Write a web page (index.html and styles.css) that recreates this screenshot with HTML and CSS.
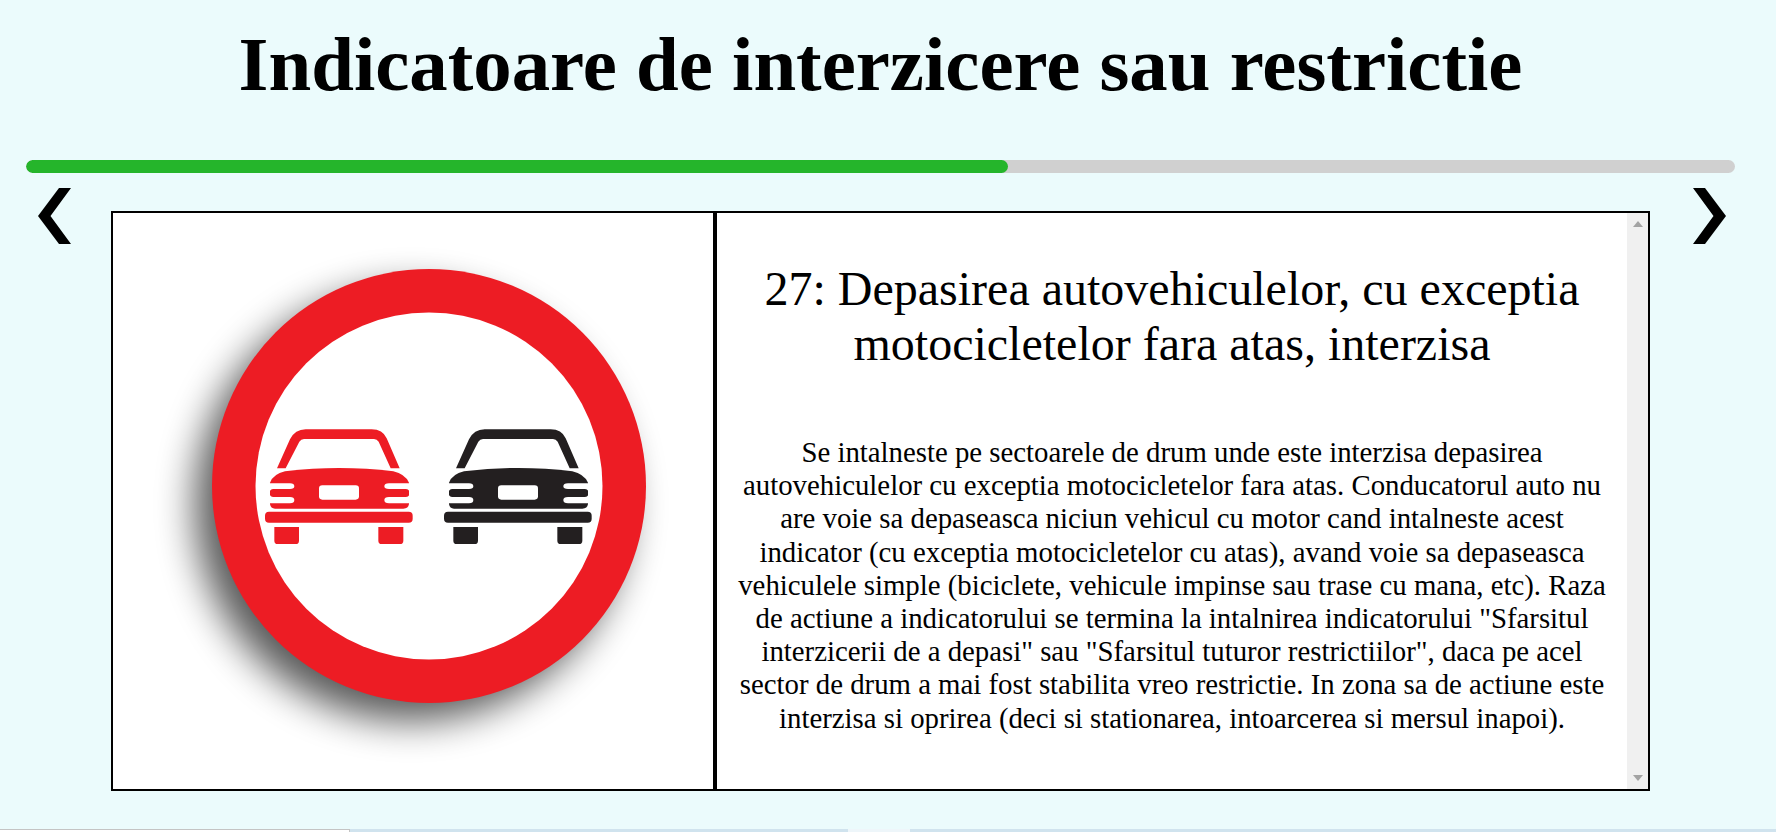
FILE: index.html
```html
<!DOCTYPE html>
<html lang="ro">
<head>
<meta charset="utf-8">
<title>Indicatoare de interzicere sau restrictie</title>
<link rel="stylesheet" href="styles.css">
</head>
<body>
<h1 class="title">Indicatoare de interzicere sau restrictie</h1>
<div class="progress"><div class="progress-fill"></div></div>
<main class="viewer">
  <a class="nav nav-prev" aria-label="Inapoi">
    <svg width="33" height="56" viewBox="0 0 33 56"><path d="M21 0H33L12.5 28 33 56H21L0 28Z"/></svg>
  </a>
  <section class="card">
    <div class="sign-panel">
      <svg class="sign" width="596" height="576" viewBox="113 213 596 576">
        <defs>
          <filter id="blur" x="-30%" y="-30%" width="160%" height="160%"><feGaussianBlur stdDeviation="19"/></filter>
          <symbol id="car" viewBox="0 0 600 510" width="200" height="170" overflow="visible">
            <path d="M111 205L150 118Q165 88 197 88H395Q428 88 440 115L479 205H452L416 125Q411 117 402 117H192Q183 117 178 125L137 205Z"/>
            <path d="M90 248Q100 222 135 214Q220 204 297 204Q380 204 460 214Q495 222 507 248V312Q505 326 490 326H105Q92 326 90 312Z"/>
            <path class="cut" d="M80 250H150Q163 250 163 259Q163 267 150 267H100Q90 267 88 279Q90 291 100 291H150Q163 291 163 300Q163 310 150 310H80Z"/>
            <path class="cut" d="M517 250H447Q433 250 433 259Q433 267 447 267H497Q508 267 509 279Q508 291 497 291H447Q433 291 433 300Q433 310 447 310H517Z"/>
            <rect class="cut" x="237" y="256" width="120" height="43" rx="10"/>
            <rect x="75" y="335" width="443" height="33" rx="12"/>
            <path d="M103 381H177V422Q177 432 167 432H113Q103 432 103 422Z"/>
            <path d="M415 381H490V422Q490 432 480 432H425Q415 432 415 422Z"/>
          </symbol>
        </defs>
        <circle class="sign-shadow" cx="411" cy="505" r="216" filter="url(#blur)"/>
        <circle class="sign-ring" cx="429" cy="486" r="217"/>
        <circle class="sign-face" cx="429" cy="486" r="173.5"/>
        <use href="#car" class="car-red" x="240" y="400"/>
        <use href="#car" class="car-black" x="419" y="400"/>
      </svg>
    </div>
    <div class="info-panel">
      <article class="info-text">
        <h2 class="sign-name">27: Depasirea autovehiculelor, cu exceptia motocicletelor fara atas, interzisa</h2>
        <p class="sign-desc">Se intalneste pe sectoarele de drum unde este interzisa depasirea autovehiculelor cu exceptia motocicletelor fara atas. Conducatorul auto nu are voie sa depaseasca niciun vehicul cu motor cand intalneste acest indicator (cu exceptia motocicletelor cu atas), avand voie sa depaseasca vehiculele simple (biciclete, vehicule impinse sau trase cu mana, etc). Raza de actiune a indicatorului se termina la intalnirea indicatorului "Sfarsitul interzicerii de a depasi" sau "Sfarsitul tuturor restrictiilor", daca pe acel sector de drum a mai fost stabilita vreo restrictie. In zona sa de actiune este interzisa si oprirea (deci si stationarea, intoarcerea si mersul inapoi).</p>
      </article>
      <div class="scrollbar" aria-hidden="true">
        <span class="arrow-up"></span>
        <span class="arrow-down"></span>
      </div>
    </div>
  </section>
  <a class="nav nav-next" aria-label="Inainte">
    <svg width="33" height="56" viewBox="0 0 33 56"><path d="M12 0H0L20.5 28 0 56H12L33 28Z"/></svg>
  </a>
</main>
<footer class="taskstrip">
  <div class="strip-white"></div>
  <div class="strip-blue strip-a"></div>
  <div class="strip-gap"></div>
  <div class="strip-blue strip-b"></div>
</footer>
</body>
</html>
```
FILE: styles.css
```css
* { box-sizing: border-box; }
html, body { height: 100%; }
body {
  margin: 0;
  height: 100vh;
  overflow: hidden;
  display: flex;
  flex-direction: column;
  background: #ebfbfc;
  color: #000;
  font-family: "Liberation Serif", "Times New Roman", serif;
}
.title {
  margin: 0;
  height: 160px;
  padding: 19px 15px 0 0;
  font-size: 76.8px;
  line-height: 92px;
  font-weight: 700;
  text-align: center;
}
.progress {
  margin-left: 26px;
  width: 1709px;
  height: 13px;
  border-radius: 7px;
  background: #d0d0d0;
  overflow: hidden;
}
.progress-fill {
  width: 982px;
  height: 100%;
  border-radius: 7px;
  background: #25b52b;
}
.viewer {
  display: flex;
  align-items: flex-start;
  margin-top: 15px;
}
.nav { display: block; flex: none; }
.nav svg { display: block; fill: #000; }
.nav-prev { width: 111px; padding: 0 0 0 38px; }
.nav-next { padding-left: 43px; }
.card {
  flex: none;
  width: 1539px;
  height: 580px;
  margin-top: 23px;
  display: flex;
  border: 2px solid #000;
  background: #fff;
}
.sign-panel {
  flex: none;
  width: 604px;
  border-right: 4px solid #000;
}
.sign { display: block; }
.sign-shadow { fill: #000; opacity: .65; }
.sign-ring { fill: #ed1c24; }
.sign-face { fill: #fff; }
.car-red { color: #ed1c24; fill: #ed1c24; }
.car-black { color: #231f20; fill: #231f20; }
.cut { fill: #fff; }
.info-panel {
  flex: 1;
  min-width: 0;
  display: flex;
}
.info-text {
  flex: 1;
  min-width: 0;
  padding: 0 20px;
  text-align: center;
}
.sign-name {
  margin: 0;
  padding-top: 48px;
  font-size: 48px;
  line-height: 55px;
  font-weight: 400;
}
.sign-desc {
  margin: 65px 0 0;
  font-size: 28.8px;
  line-height: 33.2px;
}
.scrollbar {
  flex: none;
  width: 21px;
  display: flex;
  flex-direction: column;
  justify-content: space-between;
  align-items: center;
  padding: 8px 0;
  background: #f0f0f0;
}
.arrow-up, .arrow-down {
  width: 0;
  height: 0;
  border-left: 5px solid transparent;
  border-right: 5px solid transparent;
}
.arrow-up { border-bottom: 6px solid #a3a3a3; }
.arrow-down { border-top: 6px solid #a3a3a3; }
.taskstrip {
  margin-top: auto;
  height: 3px;
  display: flex;
}
.strip-white { width: 350px; background: #fff; border-top: 1px solid #c4c4c4; border-right: 1px solid #c4c4c4; }
.strip-a { width: 498px; }
.strip-gap { width: 62px; background: #eef6fa; }
.strip-b { flex: 1; }
.strip-blue { background: #d0e3ee; }
```
